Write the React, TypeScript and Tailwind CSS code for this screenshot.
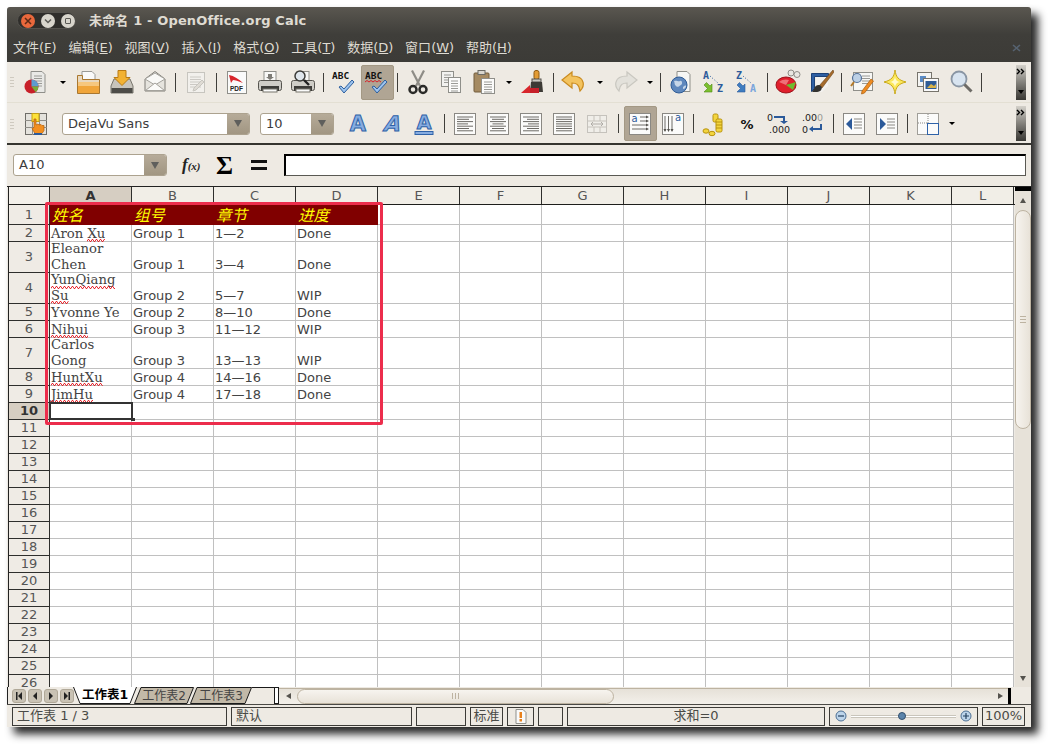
import React, { useId } from 'react';

const sans = "font-['DejaVu_Sans','Noto_Sans_CJK_SC',sans-serif]";

const Page = ({ x = 4, y = 2, w = 16, h = 20 }: { x?: number; y?: number; w?: number; h?: number }) => (
  <rect x={x + 0.5} y={y + 0.5} width={w} height={h} fill="#fafafa" stroke="#8f8f8a" />
);

const Lines = ({ x, y, w, n, gap = 2.5, c = '#9a9a96' }: { x: number; y: number; w: number; n: number; gap?: number; c?: string }) => (
  <g stroke={c}>
    {Array.from({ length: n }, (_, i) => (
      <line key={i} x1={x} x2={x + w} y1={y + i * gap} y2={y + i * gap} />
    ))}
  </g>
);

const Svg = ({ children, size = 26 }: { children: React.ReactNode; size?: number }) => (
  <svg width={size} height={size} viewBox="0 0 26 26">{children}</svg>
);

const NewDoc = () => (
  <Svg>
    <path d="M8 2.5h11l3 3v18H8z" fill="#e9e9e6" stroke="#8f8f8a" />
    <Lines x={11} y={7} w={8} n={5} />
    <circle cx="8.5" cy="17.5" r="7" fill="#c8202a" />
    <path d="M8.5 17.5V10.5a7 7 0 0 1 7 7z" fill="#5d9ccf" />
    <path d="M8.5 17.5h7a7 7 0 0 1-3 5.6z" fill="#79ad3a" />
  </Svg>
);
const Open = () => (
  <Svg>
    <path d="M6 2.5h10l3 3V14H6z" fill="#fafafa" stroke="#9a9a96" />
    <path d="M1.5 6.5h5v4h17v14h-22z" fill="#e8d8bf" stroke="#a9772f" />
    <path d="M2 13h21v11H2z" fill="#f0a53a" />
    <path d="M2 13h21v4H2z" fill="#f6c77e" />
  </Svg>
);
const Save = () => (
  <Svg>
    <path d="M5 10h16l3 7v7H2v-7z" fill="#c7c4bc" stroke="#77746c" />
    <rect x="2.5" y="19" width="21" height="5" fill="#4d4c48" />
    <path d="M9 1.5h8v7h4l-8 8-8-8h4z" fill="#f2b233" stroke="#b87a14" />
  </Svg>
);
const Mail = () => (
  <Svg>
    <path d="M3 10 13 2.5 23 10v12H3z" fill="#e6e4de" stroke="#7f7d77" />
    <path d="M3 10 13 4 23 10 13 16z" fill="#f9f9f7" stroke="#a5a39d" />
    <path d="M3.5 21.5 13 14l9.5 7.5z" fill="#fbfbf9" stroke="#a5a39d" />
  </Svg>
);
const EditDoc = () => (
  <Svg>
    <g opacity="0.4">
      <Page x={4} y={3} w={17} h={20} />
      <Lines x={7} y={8} w={11} n={5} />
      <path d="m11 19 8-8 2 2-8 8-3 1z" fill="#c9c7c0" stroke="#8f8f8a" />
    </g>
  </Svg>
);
const Pdf = () => (
  <Svg>
    <Page x={3} y={2} w={19} h={22} />
    <path d="M5 6c5 1 10 4 14 8-5-2-8-3-10-3l-2 3z" fill="#d8262c" />
    <text x="12.5" y="22" textAnchor="middle" fontSize="6.5" fontWeight="700" fontFamily="'Liberation Sans',sans-serif" fill="#222">PDF</text>
  </Svg>
);
const Printer = ({ glass }: { glass?: boolean }) => (
  <Svg>
    <rect x="7" y="2.5" width="12" height="10" fill="#f8f8f6" stroke="#8f8f8a" />
    <rect x="1.5" y="11.5" width="23" height="10" rx="2" fill="#cfcdc7" stroke="#55534e" />
    <rect x="4" y="17" width="18" height="5" fill="#3d3c39" />
    <rect x="6" y="20" width="14" height="3" fill="#fafafa" stroke="#77746c" />
    {glass ? (
      <g>
        <circle cx="10" cy="7" r="5" fill="#dfe6ec" stroke="#3b3b38" strokeWidth="1.5" />
        <path d="m14 11 5 5" stroke="#222" strokeWidth="2.4" />
      </g>
    ) : (
      <path d="M11 5h4v3h2l-4 3-4-3h2z" fill="#7d7b75" />
    )}
  </Svg>
);
const Abc = ({ wavy }: { wavy?: boolean }) => (
  <Svg>
    <text x="1" y="10" fontSize="9.5" fontWeight="700" fontFamily="'DejaVu Sans Mono',monospace" fill="#111">ABC</text>
    {wavy && <path d="M1 13l2-1.5 2 1.5 2-1.5 2 1.5 2-1.5 2 1.5 2-1.5 2 1.5" fill="none" stroke="#d6222a" />}
    <path d="m10 17 3 3 8-9 2 2-10 11-5-6z" fill="#9cc3ee" stroke="#2d5f9e" />
  </Svg>
);
const Scissors = () => (
  <Svg>
    <path d="M7 1.5 15 17M19 1.5 11 17" stroke="#8e8c86" strokeWidth="2.2" fill="none" />
    <circle cx="8" cy="20.5" r="3.5" fill="none" stroke="#2b2b29" strokeWidth="2.5" />
    <circle cx="18" cy="20.5" r="3.5" fill="none" stroke="#2b2b29" strokeWidth="2.5" />
  </Svg>
);
const Copy = () => (
  <Svg>
    <rect x="3.5" y="2.5" width="12" height="15" fill="#f2f2f0" stroke="#8f8f8a" />
    <Lines x={6} y={6} w={7} n={4} />
    <rect x="10.5" y="8.5" width="12" height="15" fill="#fbfbfa" stroke="#8f8f8a" />
    <Lines x={13} y={12} w={7} n={5} />
  </Svg>
);
const Paste = () => (
  <Svg>
    <rect x="3" y="4" width="15" height="19" rx="1" fill="#a58a62" stroke="#725c3c" />
    <rect x="7" y="1.5" width="7" height="4" fill="#d9d6ce" stroke="#6b6a65" />
    <rect x="10.5" y="9.5" width="13" height="15" fill="#fbfbfa" stroke="#8f8f8a" />
    <Lines x={13} y={13} w={8} n={5} />
  </Svg>
);
const Brush = () => (
  <Svg>
    <rect x="13" y="1.5" width="5" height="9" rx="2" fill="#e29b34" stroke="#8f5a12" />
    <rect x="11" y="10" width="9" height="3" fill="#c9c7c0" stroke="#55534e" />
    <path d="M10 13h11l1 10H9z" fill="#3c3a35" />
    <path d="M0 24 9 16v8z" fill="#d8262c" />
    <rect x="9" y="19" width="9" height="5" fill="#c6202a" />
  </Svg>
);
const Undo = ({ gray }: { gray?: boolean }) => (
  <Svg>
    <g transform={gray ? 'matrix(-1 0 0 1 26 0)' : undefined}>
      <path
        d="M12 3 2 11l10 8v-5c4 0 7 1 8 8 3-3 4-6 3-9-1-4-5-6-11-6z"
        fill={gray ? '#e3e1db' : '#f3c35f'}
        stroke={gray ? '#c9c7c0' : '#c98a1e'}
        strokeWidth="1.2"
      />
    </g>
  </Svg>
);
const Navigator = () => (
  <Svg>
    <path d="M9 2.5h10l3 3v17H9z" fill="#f6f6f4" stroke="#8f8f8a" />
    <circle cx="11" cy="16" r="8" fill="#5f88bd" stroke="#2f5c96" />
    <path d="M6 12c3-1 4 1 6 0s3 3 1 4-3 3-5 1-1-3-2-5z" fill="#c6d6e8" />
    <path d="M15 18c1-1 3-2 3-1s-1 3-3 3z" fill="#c6d6e8" />
  </Svg>
);
const Sort = ({ z }: { z?: boolean }) => (
  <Svg>
    <text x="2" y="10" fontSize="10" fontWeight="700" fontFamily="'DejaVu Sans Mono',monospace" fill="#2c5a9a">{z ? 'Z' : 'A'}</text>
    <text x="16" y="23" fontSize="10" fontWeight="700" fontFamily="'DejaVu Sans Mono',monospace" fill={z ? '#7aa5dc' : '#2c5a9a'}>{z ? 'A' : 'Z'}</text>
    <path d="M9 7l8 7" stroke="#2c5a9a" strokeDasharray="1 2" />
    <path d="M3 16l2.5-2.5 3.5 3.5 2-2v8H3l2-2 1.5-1.5z" fill={z ? '#3e7cc0' : '#7cbf2e'} stroke={z ? '#2c5a9a' : '#4f8a16'} strokeWidth="0.6" />
  </Svg>
);
const Chart = () => (
  <Svg>
    <circle cx="16" cy="4" r="3" fill="#e9e7e1" stroke="#8f8d87" />
    <circle cx="22" cy="5.5" r="3" fill="#e9e7e1" stroke="#8f8d87" />
    <ellipse cx="11" cy="16" rx="10" ry="8" fill="#e01f2c" stroke="#9c121b" />
    <path d="M11 16 21 13l-3 8z" fill="#6dbb2f" />
    <path d="M4 13c3-3 8-3 10-2l-3 5z" fill="#ee7078" />
  </Svg>
);
const Draw = () => (
  <Svg>
    <path d="M3.5 4.5h17v3h-14v12l-3 3z" fill="#2e5fa3" stroke="#1d4177" />
    <path d="M8 8h12v9l-6 6H8z" fill="#f3f3f1" opacity="0.8" />
    <path d="M25 1 11 17l3 2L26 3z" fill="#a56b2c" stroke="#6b4215" strokeWidth="0.6" />
    <path d="M6 20c1-4 5-5 7-3s0 6-4 6H4z" fill="#33322f" />
  </Svg>
);
const FindForm = () => (
  <Svg>
    <rect x="4.5" y="3.5" width="19" height="18" fill="#f7f7f5" stroke="#8f8f8a" />
    <Lines x={13} y={7} w={8} n={4} />
    <circle cx="8" cy="9" r="4.5" fill="#bcd0e6" stroke="#55729a" strokeWidth="1.2" />
    <path d="m5 13-3 4" stroke="#b47a2a" strokeWidth="2" />
    <path d="m13 22 9-12 2.5 2-9 12-3 1z" fill="#ef8c22" stroke="#a85c0c" strokeWidth="0.7" />
  </Svg>
);
const Star = () => (
  <Svg>
    <path d="M13 1c1 7 3 10 11 12-8 2-10 5-11 12-1-7-3-10-11-12 8-2 10-5 11-12z" fill="#fbe759" stroke="#c9a817" />
    <path d="M13 8c.5 3 2 4.5 5 5-3 .5-4.5 2-5 5-.5-3-2-4.5-5-5 3-.5 4.5-2 5-5z" fill="#fffbd0" />
  </Svg>
);
const Gallery = () => (
  <Svg>
    <rect x="2.5" y="3.5" width="14" height="14" fill="#f4f4f2" stroke="#77746c" />
    <rect x="5" y="7" width="6" height="6" fill="#5a8bc5" />
    <rect x="8.5" y="9.5" width="15" height="13" fill="#fafafa" stroke="#77746c" />
    <rect x="10.5" y="12" width="11" height="8" fill="#2f5c96" />
    <path d="m12 19 4-4 3 2 2-2v4z" fill="#d9b44a" />
  </Svg>
);
const Zoom = () => (
  <Svg>
    <circle cx="11" cy="10" r="7.5" fill="#d8e4f0" stroke="#8a96a4" strokeWidth="1.8" />
    <path d="m16.5 15.5 7 7" stroke="#6d6b66" strokeWidth="3" />
  </Svg>
);
const HandCell = () => (
  <Svg>
    <rect x="2.5" y="2.5" width="21" height="21" fill="#e4e2dc" stroke="#6f6d68" />
    <path d="M2 9.5h22M2 16.5h22M9.5 2v22M16.5 2v22" stroke="#8f8d87" />
    <rect x="9" y="2.5" width="7" height="8" fill="#fde23a" stroke="#c6a015" />
    <path d="M11 8h2v6l2-1 1 1 2-.5 1 1 2 0v5l-2 3h-7l-3-5 2-1z" fill="#f28f20" stroke="#b45f08" strokeWidth="0.7" />
    <rect x="11" y="22" width="8" height="2" fill="#2c5a9a" />
  </Svg>
);
const Letter = ({ italic, underline }: { italic?: boolean; underline?: boolean }) => (
  <Svg>
    <text
      x={italic ? 19 : 13}
      y={underline ? 18 : 20}
      textAnchor="middle"
      fontSize={underline ? 19 : 21}
      fontWeight="700"
      transform={italic ? 'skewX(-18)' : undefined}
      fontFamily="'DejaVu Sans',sans-serif"
      fill="#86ace0"
      stroke="#2f62a8"
      strokeWidth="1"
    >
      A
    </text>
    {underline && <rect x="4" y="20.5" width="18" height="3" fill="#86ace0" stroke="#2f62a8" />}
  </Svg>
);
const AlignBox = ({ kind }: { kind: 'l' | 'c' | 'r' | 'j' }) => {
  const rows = [16, 12, 16, 11, 16, 12, 16];
  return (
    <Svg>
      <rect x="2.5" y="2.5" width="21" height="21" fill="#fbfbfa" stroke="#8a8883" />
      <g stroke="#6d6b66">
        {rows.map((w0, i) => {
          const w = kind === 'j' ? 16 : w0;
          const x = kind === 'l' || kind === 'j' ? 5 : kind === 'r' ? 21 - w : 13 - w / 2;
          return <line key={i} x1={x} x2={x + w} y1={6 + i * 2.3} y2={6 + i * 2.3} />;
        })}
      </g>
    </Svg>
  );
};
const Merge = () => (
  <Svg>
    <g opacity="0.4">
      <rect x="3.5" y="4.5" width="19" height="17" fill="#f5f5f3" stroke="#8a8883" />
      <path d="M3 10h20M3 16h20M10 4v6M16 4v6M10 16v6M16 16v6" stroke="#8a8883" />
      <path d="M7 13h12M7 13l2-2M7 13l2 2M19 13l-2-2M19 13l-2 2" stroke="#55534e" fill="none" />
    </g>
  </Svg>
);
const WrapBox = ({ vert }: { vert?: boolean }) => (
  <Svg>
    <rect x="2.5" y="2.5" width="21" height="21" fill="#fbfbfa" stroke="#8a8883" />
    {vert ? (
      <>
        <text x="18" y="10" textAnchor="middle" fontSize="10" fontFamily="'DejaVu Sans',sans-serif" fill="#2c5a9a">a</text>
        <path d="M5 5v15M8.5 5v15M12 5v15" stroke="#6d6b66" />
        <path d="m3.5 18 1.5 3 1.5-3zm3.5 0 1.5 3 1.5-3zm3.5 0 1.5 3 1.5-3z" fill="#55534e" />
      </>
    ) : (
      <>
        <text x="7.5" y="11" textAnchor="middle" fontSize="10" fontFamily="'DejaVu Sans',sans-serif" fill="#2c5a9a">a</text>
        <path d="M13 6h7M13 10h7M5 14h15M5 18h15" stroke="#6d6b66" />
        <path d="m19 4.5 3 1.5-3 1.5zm0 4 3 1.5-3 1.5zm0 4 3 1.5-3 1.5zm0 4 3 1.5-3 1.5z" fill="#55534e" />
      </>
    )}
  </Svg>
);
const Coins = () => (
  <Svg>
    <rect x="12" y="3" width="5" height="8" rx="1.5" fill="#f3d53e" stroke="#b8930e" />
    <rect x="15" y="8" width="6" height="13" rx="1.5" fill="#f3d53e" stroke="#b8930e" />
    <path d="M15 11h6M15 14h6M15 17h6" stroke="#b8930e" />
    <ellipse cx="5" cy="20" rx="3" ry="2.2" fill="#f3d53e" stroke="#b8930e" />
    <ellipse cx="11" cy="22.5" rx="3" ry="2.2" fill="#f3d53e" stroke="#b8930e" />
  </Svg>
);
const Percent = () => (
  <Svg>
    <text x="13" y="18" textAnchor="middle" fontSize="13" fontWeight="700" fontFamily="'DejaVu Sans',sans-serif" fill="#111">%</text>
  </Svg>
);
const Decimal = ({ add }: { add?: boolean }) => (
  <svg width="30" height="26" viewBox="0 0 30 26">
    <g fontFamily="'DejaVu Sans',sans-serif" fontSize="9.5" fill="#222">
      {add ? (
        <>
          <text x="2" y="10">0</text>
          <text x="4" y="22">.000</text>
          <path d="M9 5h11v5h3l-4 3-4-3h3V7H9z" fill="#2c5a9a" />
        </>
      ) : (
        <>
          <text x="4" y="10">.00<tspan fill="#9a9a96">0</tspan></text>
          <text x="4" y="22">0</text>
          <path d="M24 13v6H15v2l-4-3 4-3v2h7v-4z" fill="#2c5a9a" />
        </>
      )}
    </g>
  </svg>
);
const Indent = ({ right }: { right?: boolean }) => (
  <Svg>
    <rect x="2.5" y="2.5" width="21" height="21" fill="#fbfbfa" stroke="#8a8883" />
    <path d={right ? 'M6 7l6 6-6 6z' : 'M11 7l-6 6 6 6z'} fill="#2c5a9a" />
    <path d="M13 8h8M13 11h8M13 14h8M13 17h8" stroke="#8a8883" />
  </Svg>
);
const Border = () => (
  <Svg>
    <rect x="2.5" y="2.5" width="21" height="21" fill="#fbfbfa" stroke="#a09e98" />
    <path d="M13 3v9M3 12h10" stroke="#8a8883" strokeDasharray="1 1" />
    <rect x="12.5" y="12.5" width="11" height="11" fill="none" stroke="#2f62a8" />
  </Svg>
);

const Btn = ({ children, active }: { children?: React.ReactNode; active?: boolean }) => (
  <div
    className={`w-[33px] h-[35px] shrink-0 flex items-center justify-center rounded-[2px] ${
      active ? 'bg-[#b0a594] border border-[#a39884]' : ''
    }`}
  >
    {children}
  </div>
);
const Sep = ({ w = 8 }: { w?: number }) => (
  <div style={{ width: w }} className="shrink-0 h-[19px] flex justify-center">
    <div className="w-px h-full bg-[#3f3e3a]" />
  </div>
);
const Drop = ({ w = 20 }: { w?: number }) => (
  <div style={{ width: w }} className="shrink-0 flex justify-center">
    <div className="w-0 h-0 border-x-[3px] border-x-transparent border-t-[3px] border-t-black" />
  </div>
);
const Grip = () => (
  <div className="w-[12.5px] shrink-0 flex flex-col gap-[2px] pl-[3px]">
    {[0, 1, 2, 3].map((i) => (
      <div key={i} className="w-[4px] h-px bg-[#cfcac0]" />
    ))}
  </div>
);
const Overflow = () => (
  <div className="ml-auto mr-[5px] w-[10px] h-[35px] flex flex-col justify-between items-center bg-gradient-to-b from-[#d4d1ca] to-[#3a3935]">
    <svg width="10" height="7" viewBox="0 0 10 7" className="mt-[3px]">
      <path d="m1 1 2.5 2.5L1 6M5 1l2.5 2.5L5 6" stroke="#000" strokeWidth="1.4" fill="none" />
    </svg>
    <div className="mb-[6px] w-0 h-0 border-x-[3.5px] border-x-transparent border-t-[4px] border-t-black" />
  </div>
);

const Combo = ({ text, w, btn = 22 }: { text: string; w: string; btn?: number }) => (
  <div className={`${w} h-[22px] shrink-0 flex bg-white border border-[#aca28f] rounded-[3px] overflow-hidden`}>
    <div className={`flex-1 pl-[5px] text-[13px] leading-[20px] text-[#3c3c3c] ${sans}`}>{text}</div>
    <div style={{ width: btn }} className="shrink-0 bg-gradient-to-b from-[#b6ab99] to-[#a19682] flex items-center justify-center">
      <div className="w-0 h-0 border-x-[4px] border-x-transparent border-t-[7px] border-t-[#5f5f5c]" />
    </div>
  </div>
);

const menus: [string, string][] = [
  ['文件', 'F'],
  ['编辑', 'E'],
  ['视图', 'V'],
  ['插入', 'I'],
  ['格式', 'O'],
  ['工具', 'T'],
  ['数据', 'D'],
  ['窗口', 'W'],
  ['帮助', 'H'],
];

const columns = ['A', 'B', 'C', 'D', 'E', 'F', 'G', 'H', 'I', 'J', 'K', 'L'];

// spell-check squiggle under a misspelled word
const Bad = ({ children }: { children: React.ReactNode }) => {
  const id = useId();
  return (
    <span className="relative inline-block">
      {children}
      <svg className="absolute left-0 bottom-[-1px] w-full h-[3px]">
        <defs>
          <pattern id={id} width="4" height="3" patternUnits="userSpaceOnUse">
            <path d="M0 2.5 1 .5h1l1 2h1" fill="none" stroke="#e5141c" strokeWidth="0.9" />
          </pattern>
        </defs>
        <rect width="100%" height="3" fill={`url(#${id})`} />
      </svg>
    </span>
  );
};

const rows: { h: number; name?: React.ReactNode; group?: string; ch?: string; st?: string }[] = [
  { h: 17, name: <>Aron <Bad>Xu</Bad></>, group: 'Group 1', ch: '1—2', st: 'Done' },
  { h: 31, name: <>Eleanor<br />Chen</>, group: 'Group 1', ch: '3—4', st: 'Done' },
  { h: 31, name: <><Bad>YunQiang</Bad><br /><Bad>Su</Bad></>, group: 'Group 2', ch: '5—7', st: 'WIP' },
  { h: 17, name: 'Yvonne Ye', group: 'Group 2', ch: '8—10', st: 'Done' },
  { h: 17, name: <Bad>Nihui</Bad>, group: 'Group 3', ch: '11—12', st: 'WIP' },
  { h: 31, name: <>Carlos<br />Gong</>, group: 'Group 3', ch: '13—13', st: 'WIP' },
  { h: 17, name: <Bad>HuntXu</Bad>, group: 'Group 4', ch: '14—16', st: 'Done' },
  { h: 17, name: <Bad>JimHu</Bad>, group: 'Group 4', ch: '17—18', st: 'Done' },
];

const RowHead = ({ n, h, on }: { n: number; h: number; on?: boolean }) => (
  <div
    style={{ height: h }}
    className={`w-[41px] shrink-0 border-r border-b border-r-[#2e2e2c] border-b-[#2e2e2c] flex items-center justify-center text-[13px] ${sans} ${
      on ? 'bg-[#d6cec2] font-bold text-[#333]' : 'bg-[#efebe5] text-[#555]'
    }`}
  >
    {n}
  </div>
);

const Cell = ({ children, serif, w }: { children?: React.ReactNode; serif?: boolean; w: string }) => (
  <div
    className={`${w} shrink-0 h-full border-r border-[#c0c0c0] bg-white flex items-end pl-[1px] leading-[15.5px] text-[#444] whitespace-nowrap ${
      serif ? "text-[13.2px] font-['DejaVu_Serif',serif]" : `text-[13px] ${sans}`
    }`}
  >
    {children ? <div>{children}</div> : null}
  </div>
);

const EmptyCells = ({ from }: { from: number }) => (
  <>
    {columns.slice(from).map((c) => (
      <Cell key={c} w={c === 'L' ? 'w-[62px]' : 'w-[82px]'} />
    ))}
  </>
);

const Tab = ({ label, active, w, cls }: { label: string; active?: boolean; w: number; cls?: string }) => (
  <div style={{ width: w }} className={`relative h-[17px] shrink-0 flex items-center justify-center ${cls ?? ''}`}>
    <svg className="absolute inset-0" width={w} height="17">
      {active ? (
        <path d={`M0.5 0 L7 16.5 H${w - 7} L${w - 0.5} 0`} fill="#fff" stroke="#1a1a1a" />
      ) : (
        <path d={`M0.5 16.5 L7 0.5 H${w - 0.5} L${w - 7} 16.5 Z`} fill="#c2b9a8" stroke="#1a1a1a" />
      )}
    </svg>
    <span className={`relative ${sans} ${active ? 'text-[12.5px] font-bold text-black' : 'text-[12px] text-[#444]'}`}>{label}</span>
  </div>
);

const NavBtn = ({ kind }: { kind: 'first' | 'prev' | 'next' | 'last' }) => (
  <div className="w-[14px] h-[14px] shrink-0 bg-[#c9c2b4] border border-[#b0a898] rounded-[3px] flex items-center justify-center">
    <svg width="8" height="8" viewBox="0 0 8 8" fill="#222">
      {kind === 'first' && <path d="M1 0h1.500v8H1zM7 0v8L3 4z" />}
      {kind === 'prev' && <path d="M6 0v8L2 4z" />}
      {kind === 'next' && <path d="M2 0v8l4-4z" />}
      {kind === 'last' && <path d="M7 0H5.500v8H7zM1 0v8l4-4z" />}
    </svg>
  </div>
);

const Stat = ({ w, children, cls }: { w: string; children?: React.ReactNode; cls?: string }) => (
  <div className={`${w} h-[19px] shrink-0 border border-[#3c3b37] flex items-center text-[13px] text-[#4a4a46] ${sans} ${cls ?? ''}`}>
    {children}
  </div>
);

const ZoomBtn = ({ plus }: { plus?: boolean }) => (
  <svg width="12" height="12" viewBox="0 0 12 12" className="shrink-0">
    <circle cx="6" cy="6" r="5" fill="#bcd4ea" stroke="#4c6f94" />
    <path d={plus ? 'M3 6h6M6 3v6' : 'M3 6h6'} stroke="#23405f" strokeWidth="1.2" />
  </svg>
);

export default function App() {
  return (
    <div className="w-[1054px] h-[750px] bg-white pt-[7px] pl-[7px] overflow-hidden">
      <div className="relative w-[1024px] h-[720px] flex flex-col bg-[#eeeae3] rounded-t-[3px] shadow-[7px_7px_9px_rgba(0,0,0,0.85)]">
        {/* title + menu */}
        <div className="h-[55px] shrink-0 bg-gradient-to-b from-[#5a5750] via-[#3f3e3a] to-[#3c3b37] rounded-t-[3px]">
          <div className="h-[27px] flex items-center pl-[10px]">
            <div className="w-[59px] h-[17px] rounded-full bg-[#2f2e2b] border border-[#55534e] flex items-center gap-[6px] pl-[3px]">
              <div className="w-[14px] h-[14px] rounded-full bg-[#e9683c] flex items-center justify-center">
                <svg width="8" height="8" viewBox="0 0 8 8"><path d="m1 1 6 6M7 1 1 7" stroke="#5c2a16" strokeWidth="1.5" /></svg>
              </div>
              <div className="w-[14px] h-[14px] rounded-full bg-[#d8d5cc] flex items-center justify-center">
                <svg width="8" height="8" viewBox="0 0 8 8"><path d="m1 2.5 3 3 3-3" stroke="#5b5a55" strokeWidth="1.5" fill="none" /></svg>
              </div>
              <div className="w-[14px] h-[14px] rounded-full bg-[#d8d5cc] flex items-center justify-center">
                <div className="w-[6px] h-[6px] border border-[#5b5a55] rounded-[1px]" />
              </div>
            </div>
            <div className={`ml-[13px] text-[13px] font-bold tracking-[0.15px] text-[#dfdbd2] ${sans}`}>未命名 1 - OpenOffice.org Calc</div>
          </div>
          <div className="h-[28px] flex items-center pl-[6px] pr-[10px] pb-[1px]">
            <div className={`flex gap-[11.75px] text-[13px] text-[#dfdbd2] ${sans}`}>
              {menus.map(([t, k]) => (
                <span key={t}>
                  {t}(<span className="underline">{k}</span>)
                </span>
              ))}
            </div>
            <svg width="9" height="8" viewBox="0 0 9 8" className="ml-auto">
              <path d="m1 1 7 6M8 1 1 7" stroke="#566270" strokeWidth="1.6" fill="none" />
            </svg>
          </div>
        </div>

        {/* standard toolbar */}
        <div className="h-[41px] shrink-0 flex items-center border-b border-[#e3dfd3]">
          <Grip />
          <Btn><NewDoc /></Btn>
          <Drop />
          <Btn><Open /></Btn>
          <Btn><Save /></Btn>
          <Btn><Mail /></Btn>
          <Sep />
          <Btn><EditDoc /></Btn>
          <Sep />
          <Btn><Pdf /></Btn>
          <Btn><Printer /></Btn>
          <Btn><Printer glass /></Btn>
          <Sep />
          <Btn><Abc /></Btn>
          <Btn active><Abc wavy /></Btn>
          <Sep />
          <Btn><Scissors /></Btn>
          <Btn><Copy /></Btn>
          <Btn><Paste /></Btn>
          <Drop w={17} />
          <Btn><Brush /></Btn>
          <Sep w={6} />
          <Btn><Undo /></Btn>
          <Drop />
          <Btn><Undo gray /></Btn>
          <Drop w={14} />
          <Sep />
          <Btn><Navigator /></Btn>
          <Btn><Sort /></Btn>
          <Btn><Sort z /></Btn>
          <Sep />
          <Btn><Chart /></Btn>
          <Btn><Draw /></Btn>
          <Sep />
          <Btn><FindForm /></Btn>
          <Btn><Star /></Btn>
          <Btn><Gallery /></Btn>
          <Btn><Zoom /></Btn>
          <Sep />
          <Overflow />
        </div>

        {/* formatting toolbar */}
        <div className="h-[42px] shrink-0 flex items-center pt-[1px] border-b-2 border-[#35342f]">
          <Grip />
          <Btn><HandCell /></Btn>
          <div className="w-[9.5px] shrink-0" />
          <Combo text="DejaVu Sans" w="w-[188px]" />
          <div className="w-[10px] shrink-0" />
          <Combo text="10" w="w-[74px]" />
          <div className="w-[7.5px] shrink-0" />
          <Btn><Letter /></Btn>
          <Btn><Letter italic /></Btn>
          <Btn><Letter underline /></Btn>
          <Sep />
          <Btn><AlignBox kind="l" /></Btn>
          <Btn><AlignBox kind="c" /></Btn>
          <Btn><AlignBox kind="r" /></Btn>
          <Btn><AlignBox kind="j" /></Btn>
          <Btn><Merge /></Btn>
          <Sep w={10} />
          <Btn active><WrapBox /></Btn>
          <Btn><WrapBox vert /></Btn>
          <Sep />
          <Btn><Coins /></Btn>
          <Btn><Percent /></Btn>
          <Btn><Decimal add /></Btn>
          <Btn><Decimal /></Btn>
          <Sep />
          <Btn><Indent /></Btn>
          <Btn><Indent right /></Btn>
          <Sep />
          <Btn><Border /></Btn>
          <Drop w={14} />
          <Overflow />
        </div>

        {/* formula bar */}
        <div className="h-[41px] shrink-0 flex items-center pl-[6px] pr-[5px] pb-[1px]">
          <Combo text="A10" w="w-[154px]" />
          <div className="w-[15px] shrink-0" />
          <div className="w-[21px] -mt-[2px] font-['Liberation_Serif',serif] italic font-bold text-[17px] leading-none text-[#222] whitespace-nowrap">
            f<span className="text-[11px]">(x)</span>
          </div>
          <div className="ml-[13px] mt-[2px] w-[16px] font-['Liberation_Serif',serif] font-bold text-[26px] leading-none text-black">Σ</div>
          <div className="ml-[19px] w-[16px] flex flex-col gap-[4px]">
            <div className="h-[3px] bg-[#111]" />
            <div className="h-[3px] bg-[#111]" />
          </div>
          <div className="ml-[17px] flex-1 h-[22px] bg-white border border-[#5a5953] border-t-2 border-l-2 border-t-black border-l-black" />
        </div>

        {/* grid + vertical scrollbar */}
        <div className="relative h-[501px] shrink-0 flex border-t border-[#222] pl-[1px]">
          <div className="flex-1 min-w-0 border-l border-[#222] overflow-hidden">
            <div className="flex h-[18px] border-b border-[#1e1e1c]">
              <div className="w-[41px] shrink-0 bg-[#f3f0ea] border-r border-[#2e2e2c]" />
              {columns.map((c) => (
                <div
                  key={c}
                  className={`${c === 'L' ? 'w-[62px]' : 'w-[82px]'} shrink-0 border-r border-[#2e2e2c] flex items-center justify-center text-[13px] ${sans} ${
                    c === 'A' ? 'bg-[#d6cec2] font-bold text-[#333]' : 'bg-[#f1eee7] text-[#555]'
                  }`}
                >
                  {c}
                </div>
              ))}
            </div>

            <div className="flex h-[20px]">
              <RowHead n={1} h={20} />
              <div className="w-[328px] shrink-0 h-[20px] bg-[#800000] flex border-b border-[#800000]">
                {['姓名', '组号', '章节', '进度'].map((t) => (
                  <div key={t} className="w-[82px] shrink-0 pl-[2px] text-[15.5px] leading-[18px] italic text-[#ffff00] font-['Noto_Sans_CJK_SC',sans-serif]">
                    {t}
                  </div>
                ))}
              </div>
              <div className="h-[20px] flex border-b border-[#c0c0c0]"><EmptyCells from={4} /></div>
            </div>

            {rows.map((r, i) => (
              <div key={i} style={{ height: r.h }} className="flex">
                <RowHead n={i + 2} h={r.h} />
                <div className="flex h-full border-b border-[#c0c0c0]">
                  <Cell w="w-[82px]" serif>{r.name}</Cell>
                  <Cell w="w-[82px]">{r.group}</Cell>
                  <Cell w="w-[82px]">{r.ch}</Cell>
                  <Cell w="w-[82px]">{r.st}</Cell>
                  <EmptyCells from={4} />
                </div>
              </div>
            ))}

            {Array.from({ length: 17 }, (_, i) => i + 10).map((n) => (
              <div key={n} className="flex h-[17px]">
                <RowHead n={n} h={17} on={n === 10} />
                <div className="relative flex h-full border-b border-[#c0c0c0]">
                  {n === 10 && (
                    <>
                      <div className="absolute z-10 left-[-1px] top-[-1px] w-[84px] h-[18px] border-2 border-[#333]" />
                      <div className="absolute z-10 left-[81px] top-[15px] w-[4px] h-[3px] bg-[#333]" />
                    </>
                  )}
                  <EmptyCells from={0} />
                </div>
              </div>
            ))}
          </div>

          {/* vertical scrollbar */}
          <div className="w-[16px] shrink-0 flex flex-col bg-[#e7e2d9] relative">
            <div className="h-[4px] bg-black" />
            <div className="h-[19px] flex items-center justify-center">
              <div className="w-0 h-0 border-x-[3.5px] border-x-transparent border-b-[5px] border-b-[#55534e]" />
            </div>
            <div className="h-[219px] rounded-full border border-[#bdb3a1] bg-gradient-to-r from-[#f7f4ef] to-[#e8e2d8] flex flex-col gap-[2px] items-center justify-center">
              <div className="w-[6px] h-px bg-[#bdb3a1]" />
              <div className="w-[6px] h-px bg-[#bdb3a1]" />
              <div className="w-[6px] h-px bg-[#bdb3a1]" />
            </div>
            <div className="flex-1 flex items-end justify-center pb-[6px]">
              <div className="w-0 h-0 border-x-[3.5px] border-x-transparent border-t-[5px] border-t-[#55534e]" />
            </div>
          </div>

          {/* highlight frame drawn over the sheet */}
          <div className="absolute z-20 left-[38px] top-[15px] w-[338px] h-[223px] border-[3px] border-[#ec2d4c] rounded-[2px] pointer-events-none" />
        </div>

        {/* tabs + horizontal scrollbar */}
        <div className="h-[17px] shrink-0 flex items-center pl-[1px] border-l border-[#222]">
          <div className="w-[64px] pl-[3px] shrink-0 flex gap-[2px]">
            <NavBtn kind="first" />
            <NavBtn kind="prev" />
            <NavBtn kind="next" />
            <NavBtn kind="last" />
          </div>
          <Tab label="工作表1" active w={64} />
          <Tab label="工作表2" w={60} cls="-ml-[3px]" />
          <Tab label="工作表3" w={62} cls="-ml-[4px]" />
          <div className="w-[22px] h-full border-t border-[#1a1a1a] shrink-0" />
          <div className="w-[5px] h-full border border-[#1a1a1a] bg-white shrink-0" />
          <div className="flex-1 h-[16px] flex items-center bg-gradient-to-b from-[#e6e1d8] to-[#f3f0ea] border-t border-[#bdb3a1] mr-[20px]">
            <div className="w-[18px] flex justify-center">
              <div className="w-0 h-0 border-y-[3.5px] border-y-transparent border-r-[5px] border-r-[#55534e]" />
            </div>
            <div className="w-[317px] h-[15px] rounded-full border border-[#bdb3a1] bg-gradient-to-b from-[#f7f4ef] to-[#e8e2d8] flex gap-[2px] items-center justify-center">
              <div className="w-px h-[6px] bg-[#bdb3a1]" />
              <div className="w-px h-[6px] bg-[#bdb3a1]" />
              <div className="w-px h-[6px] bg-[#bdb3a1]" />
            </div>
            <div className="flex-1 flex justify-end pr-[5px]">
              <div className="w-0 h-0 border-y-[3.5px] border-y-transparent border-l-[5px] border-l-[#55534e]" />
            </div>
            <div className="w-[3px] h-[16px] bg-black" />
          </div>
        </div>

        {/* status bar */}
        <div className="flex-1 flex items-center gap-[4px] pl-[5px] border-t border-[#4a4945]">
          <Stat w="w-[215px]" cls="pl-[4px]">工作表 1 / 3</Stat>
          <Stat w="w-[181px]" cls="pl-[4px]">默认</Stat>
          <Stat w="w-[50px]" />
          <Stat w="w-[33px]" cls="justify-center">标准</Stat>
          <Stat w="w-[27px]" cls="justify-center">
            <svg width="12" height="15" viewBox="0 0 12 15">
              <path d="M1 .5h7l3 3v11H1z" fill="#fafafa" stroke="#8f8f8a" />
              <rect x="4.5" y="3" width="2.5" height="6" fill="#e8811c" />
              <rect x="4.5" y="10" width="2.5" height="2.5" fill="#e8811c" />
            </svg>
          </Stat>
          <Stat w="w-[25px]" />
          <Stat w="w-[258px]" cls="justify-center">求和=0</Stat>
          <Stat w="w-[149px]" cls="px-[5px] gap-[4px]">
            <ZoomBtn />
            <div className="relative flex-1 h-[3px] bg-white border-y border-[#c9c5bb]">
              <div className="absolute left-[45%] top-[-4px] w-[8px] h-[8px] rounded-full bg-[#5b84ab] border border-[#33506e]" />
            </div>
            <ZoomBtn plus />
          </Stat>
          <Stat w="w-[43px]" cls="justify-center">100%</Stat>
        </div>
      </div>
    </div>
  );
}
